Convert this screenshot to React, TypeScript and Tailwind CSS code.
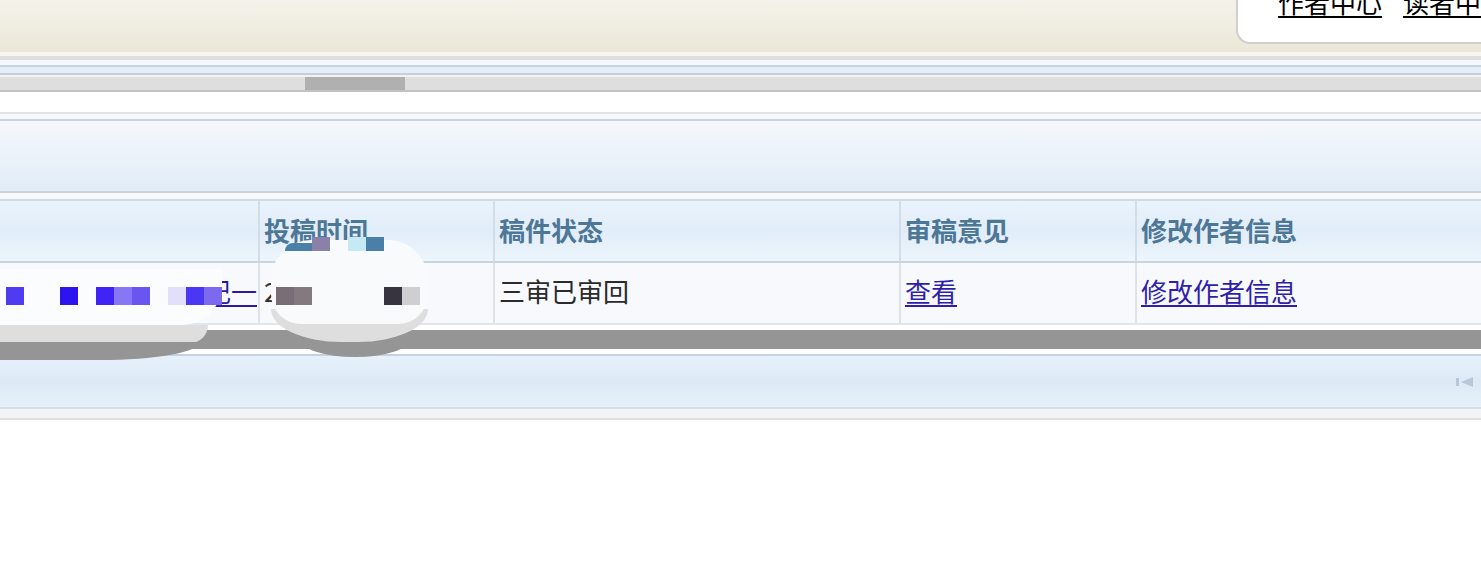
import React from 'react'

const font = { fontFamily: '"Noto Sans CJK SC", "Noto Sans", sans-serif' }

const headers = ['', '投稿时间', '稿件状态', '审稿意见', '修改作者信息']

// pixelated mosaic left by the screenshot's redaction
const titleBlocks = [
  { x: 6, c: '#4f3cf0' },
  { x: 60, c: '#2d14ef' },
  { x: 96, c: '#3f25f5' },
  { x: 114, c: '#8777f5' },
  { x: 132, c: '#6a55f2' },
  { x: 168, c: '#e2dffb' },
  { x: 186, c: '#4a36f3' },
  { x: 204, c: '#7b69f0' },
]

function TopBand() {
  return (
    <div className="h-[52px] bg-gradient-to-b from-[#f4f2ea] to-[#ebe7d8] flex justify-end items-start">
      <div className="w-[245px] h-[44px] bg-white border-l-2 border-b-2 border-[#cfcfcc] rounded-bl-[14px] overflow-hidden">
        <div className="flex gap-[21px] pl-[40px] -mt-[14px] text-[26px] text-black leading-[32px]">
          <a className="underline underline-offset-[3px] decoration-2 whitespace-nowrap">作者中心</a>
          <a className="underline underline-offset-[3px] decoration-2 whitespace-nowrap">读者中心</a>
        </div>
      </div>
    </div>
  )
}

function ScrollStrip() {
  return (
    <div className="flex flex-col">
      <div className="h-[4px] bg-[#f7f5ef]" />
      <div className="h-[4px] bg-[#dedede]" />
      <div className="h-[5px] bg-[#f4f8fd]" />
      <div className="h-[2px] bg-[#c7d3de]" />
      <div className="h-[6px] bg-[#e4eef9]" />
      <div className="h-[2px] bg-[#c6d0da]" />
      <div className="h-[2px] bg-[#f2f2f2]" />
      <div className="h-[13px] bg-[#dedede] flex">
        <div className="ml-[305px] w-[100px] bg-[#b0b0b0]" />
      </div>
      <div className="h-[2px] bg-[#c2c2c2]" />
    </div>
  )
}

export default function App() {
  return (
    <div className="w-[1481px] h-[579px] bg-white overflow-hidden" style={font}>
      <TopBand />
      <ScrollStrip />
      <div className="h-[20px] bg-white" />
      <div className="h-[2px] bg-[#e3e3e3]" />
      <div className="h-[5px] bg-[#f6f9fc]" />
      <div className="h-[2px] bg-[#c8d5df]" />
      <div className="h-[70px] bg-gradient-to-b from-[#f5f8fc] to-[#e1ecf7]" />
      <div className="h-[2px] bg-[#c8d5df]" />
      <div className="h-[6px] bg-[#f7f9fc]" />

      <div className="relative">
        <div className="border-t-2 border-[#d1dbe4]">
          <div className="grid grid-cols-[260px_235px_406px_236px_1fr] h-[60px] bg-gradient-to-b from-[#e9f3fc] via-[#e1edf8] to-[#edf5fc]">
            {headers.map((h, i) => (
              <div
                key={i}
                className={`flex items-center pl-[4px] pb-[4px] text-[26px] font-bold text-[#4d7797] ${i < 4 ? 'border-r-2 border-[#d3dde6]' : ''}`}
              >
                {h}
              </div>
            ))}
          </div>
          <div className="h-[2px] bg-[#c9d6e0]" />
          <div className="grid grid-cols-[260px_235px_406px_236px_1fr] h-[60px] bg-[#f7f9fc] text-[26px]">
            <div className="border-r-2 border-[#dde3e8] flex items-center justify-end pr-[1px] pb-[6px]">
              <a className="underline underline-offset-[3px] text-[#2a1a9e]">记一</a>
            </div>
            <div className="border-r-2 border-[#dde3e8] flex items-center pl-[4px] pb-[6px] text-[#333]">2</div>
            <div className="border-r-2 border-[#dde3e8] flex items-center pl-[4px] pb-[6px] text-[#2b2b2b]">三审已审回</div>
            <div className="border-r-2 border-[#dde3e8] flex items-center pl-[4px] pb-[6px]">
              <a className="underline underline-offset-[3px] text-[#2f1fa8]">查看</a>
            </div>
            <div className="flex items-center pl-[4px] pb-[6px]">
              <a className="underline underline-offset-[3px] text-[#2f1fa8]">修改作者信息</a>
            </div>
          </div>
          <div className="h-[2px] bg-[#e2e6ea]" />
        </div>
        <div className="h-[5px] bg-white" />
        <div className="h-[19px] bg-[#959595]" />
        <div className="h-[5px] bg-white" />

        {/* redaction overlays */}
        <div className="absolute left-0 top-[70px] w-[222px] h-[56px] bg-[#fbfcfe] rounded-br-[40px]" />
        <div className="absolute left-0 top-[126px] w-[208px] h-[18px] bg-[#dedede] rounded-br-[30px]" />
        <div className="absolute left-0 top-[143px] w-[200px] h-[18px] bg-[#959595] rounded-br-[100px_18px]" />
        <div className="absolute left-[300px] top-[140px] w-[110px] h-[18px] bg-[#959595] rounded-b-[55px_18px]" />
        <div className="absolute left-[271px] top-[110px] w-[157px] h-[33px] bg-[#dedede] rounded-b-[70px_33px]" />
        <div className="absolute left-[271px] top-[41px] w-[157px] h-[84px] bg-[#f9fafc] rounded-t-[40px] rounded-b-[30px]" />
        <div className="absolute left-[285px] top-[44px] w-[30px] h-[8px] bg-[#4a7fa8] rounded-tl-[30px]" />
        <div className="absolute left-[312px] top-[38px] w-[18px] h-[14px] bg-[#8a80a8]" />
        <div className="absolute left-[348px] top-[38px] w-[18px] h-[14px] bg-[#c5eaf5]" />
        <div className="absolute left-[366px] top-[38px] w-[18px] h-[14px] bg-[#4a7fa8]" />
        {titleBlocks.map((b) => (
          <div
            key={b.x}
            className="absolute top-[88px] w-[18px] h-[18px]"
            style={{ left: b.x, backgroundColor: b.c }}
          />
        ))}
        <div className="absolute left-[276px] top-[88px] w-[18px] h-[18px] bg-[#7a6e76]" />
        <div className="absolute left-[294px] top-[88px] w-[18px] h-[18px] bg-[#857980]" />
        <div className="absolute left-[384px] top-[88px] w-[18px] h-[18px] bg-[#38343f]" />
        <div className="absolute left-[402px] top-[88px] w-[18px] h-[18px] bg-[#cfcfd2]" />
      </div>

      <div className="h-[2px] bg-[#c5d3de]" />
      <div className="h-[51px] bg-gradient-to-b from-[#e6f1fb] via-[#dde9f5] to-[#e6f1fb] flex items-center justify-end pr-[7px]">
        <svg width="18" height="12" viewBox="0 0 18 12">
          <rect x="0" y="2" width="3" height="8" fill="#b8c8d8" />
          <polygon points="5,6 17,1 17,11" fill="#b8c8d8" />
        </svg>
      </div>
      <div className="h-[2px] bg-[#d6dde5]" />
      <div className="h-[9px] bg-[#f3f4f6]" />
      <div className="h-[2px] bg-[#dedede]" />
    </div>
  )
}
